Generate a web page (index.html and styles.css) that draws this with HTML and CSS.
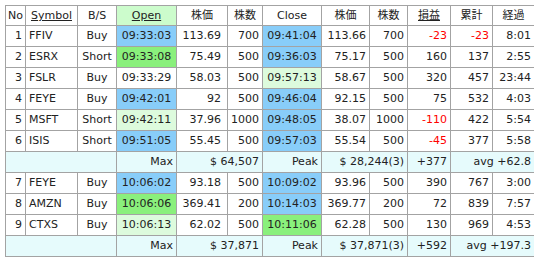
FILE: index.html
```
<!DOCTYPE html>
<html lang="ja">
<head>
  <meta charset="UTF-8">
  <title>Trades</title>
  <link rel="stylesheet" href="styles.css">
</head>
<body>
  <table class="trades">
    <colgroup>
      <col style="width: 20px">
      <col style="width: 52px">
      <col style="width: 39px">
      <col style="width: 60px">
      <col style="width: 51px">
      <col style="width: 35px">
      <col style="width: 59px">
      <col style="width: 48px">
      <col style="width: 38px">
      <col style="width: 43px">
      <col style="width: 42px">
      <col style="width: 42px">
    </colgroup>
    <thead>
      <tr>
        <th>No</th>
        <th><a href="#">Symbol</a></th>
        <th>B/S</th>
        <th class="sorted"><a href="#">Open</a></th>
        <th>株価</th>
        <th>株数</th>
        <th>Close</th>
        <th>株価</th>
        <th>株数</th>
        <th><a href="#">損益</a></th>
        <th>累計</th>
        <th>経過</th>
      </tr>
    </thead>
    <tbody>
      <tr>
        <td class="num">1</td><td class="sym">FFIV</td><td class="mid">Buy</td>
        <td class="mid t-blue">09:33:03</td><td class="num px">113.69</td><td class="num">700</td>
        <td class="mid t-blue">09:41:04</td><td class="num">113.66</td><td class="num">700</td>
        <td class="num neg">-23</td><td class="num neg">-23</td><td class="num">8:01</td>
      </tr>
      <tr>
        <td class="num">2</td><td class="sym">ESRX</td><td class="mid">Short</td>
        <td class="mid t-green">09:33:08</td><td class="num px">75.49</td><td class="num">500</td>
        <td class="mid t-blue">09:36:03</td><td class="num">75.17</td><td class="num">500</td>
        <td class="num">160</td><td class="num">137</td><td class="num">2:55</td>
      </tr>
      <tr>
        <td class="num">3</td><td class="sym">FSLR</td><td class="mid">Buy</td>
        <td class="mid">09:33:29</td><td class="num px">58.03</td><td class="num">500</td>
        <td class="mid t-pale">09:57:13</td><td class="num">58.67</td><td class="num">500</td>
        <td class="num">320</td><td class="num">457</td><td class="num">23:44</td>
      </tr>
      <tr>
        <td class="num">4</td><td class="sym">FEYE</td><td class="mid">Buy</td>
        <td class="mid t-blue">09:42:01</td><td class="num px">92</td><td class="num">500</td>
        <td class="mid t-blue">09:46:04</td><td class="num">92.15</td><td class="num">500</td>
        <td class="num">75</td><td class="num">532</td><td class="num">4:03</td>
      </tr>
      <tr>
        <td class="num">5</td><td class="sym">MSFT</td><td class="mid">Short</td>
        <td class="mid t-pale">09:42:11</td><td class="num px">37.96</td><td class="num">1000</td>
        <td class="mid t-blue">09:48:05</td><td class="num">38.07</td><td class="num">1000</td>
        <td class="num neg">-110</td><td class="num">422</td><td class="num">5:54</td>
      </tr>
      <tr>
        <td class="num">6</td><td class="sym">ISIS</td><td class="mid">Short</td>
        <td class="mid t-blue">09:51:05</td><td class="num px">55.45</td><td class="num">500</td>
        <td class="mid t-blue">09:57:03</td><td class="num">55.54</td><td class="num">500</td>
        <td class="num neg">-45</td><td class="num">377</td><td class="num">5:58</td>
      </tr>
      <tr class="summary">
        <td colspan="3"></td>
        <td class="num">Max</td><td class="num" colspan="2">$ 64,507</td>
        <td class="num">Peak</td><td class="num" colspan="2">$ 28,244(3)</td>
        <td class="num">+377</td><td class="num" colspan="2">avg +62.8</td>
      </tr>
      <tr>
        <td class="num">7</td><td class="sym">FEYE</td><td class="mid">Buy</td>
        <td class="mid t-blue">10:06:02</td><td class="num px">93.18</td><td class="num">500</td>
        <td class="mid t-blue">10:09:02</td><td class="num">93.96</td><td class="num">500</td>
        <td class="num">390</td><td class="num">767</td><td class="num">3:00</td>
      </tr>
      <tr>
        <td class="num">8</td><td class="sym">AMZN</td><td class="mid">Buy</td>
        <td class="mid t-green">10:06:06</td><td class="num px">369.41</td><td class="num">200</td>
        <td class="mid t-blue">10:14:03</td><td class="num">369.77</td><td class="num">200</td>
        <td class="num">72</td><td class="num">839</td><td class="num">7:57</td>
      </tr>
      <tr>
        <td class="num">9</td><td class="sym">CTXS</td><td class="mid">Buy</td>
        <td class="mid t-pale">10:06:13</td><td class="num px">62.02</td><td class="num">500</td>
        <td class="mid t-green">10:11:06</td><td class="num">62.28</td><td class="num">500</td>
        <td class="num">130</td><td class="num">969</td><td class="num">4:53</td>
      </tr>
      <tr class="summary">
        <td colspan="3"></td>
        <td class="num">Max</td><td class="num" colspan="2">$ 37,871</td>
        <td class="num">Peak</td><td class="num" colspan="2">$ 37,871(3)</td>
        <td class="num">+592</td><td class="num" colspan="2">avg +197.3</td>
      </tr>
    </tbody>
  </table>
</body>
</html>
```
FILE: styles.css
```
body {
  margin: 5px;
  background: white;
  font-family: 'DejaVu Sans', 'Noto Sans CJK JP', sans-serif;
  font-size: 11px;
  color: #222;
}

.trades {
  border-collapse: collapse;
  table-layout: fixed;
  width: 530px;
}

.trades th,
.trades td {
  border: 1px solid #a3a3a3;
  padding: 0 3px;
  white-space: nowrap;
  overflow: hidden;
}

.trades th {
  font-weight: normal;
  text-align: center;
  height: 19px;
  line-height: 19px;
  padding: 0 1px;
}

.trades td {
  height: 20px;
  line-height: 20px;
}

.trades th a {
  color: #222;
  text-decoration: underline;
}

.trades th.sorted {
  background: #ccfccc;
}

.num {
  text-align: right;
}

.mid {
  text-align: center;
}

.sym {
  text-align: left;
  padding-left: 4px;
}

.px {
  padding-right: 6px !important;
}

.neg {
  color: #ff0000;
}

.t-blue {
  background: #88cdf9;
}

.t-green {
  background: #8af07c;
}

.t-pale {
  background: #ddfbdd;
}

.summary td {
  background: #e6fbfc;
}
```
